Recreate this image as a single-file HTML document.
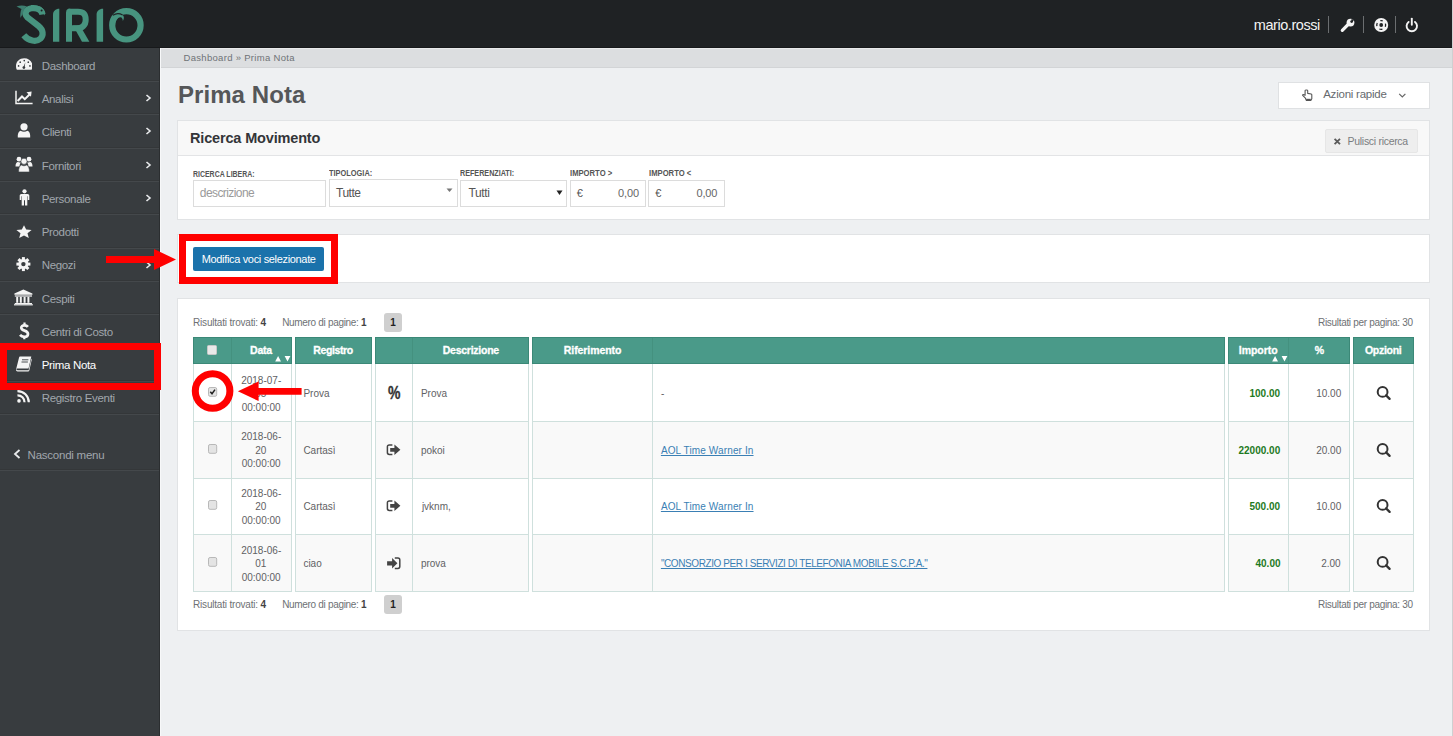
<!DOCTYPE html>
<html><head><meta charset="utf-8"><title>Prima Nota</title>
<style>
html,body{margin:0;padding:0;}
body{width:1453px;height:736px;overflow:hidden;position:relative;background:#eef0f2;font-family:"Liberation Sans",sans-serif;}
.r{position:absolute;display:block;}
.t{position:absolute;white-space:pre;line-height:1;}
</style></head><body>

<div class="r" style="left:0px;top:0px;width:1452px;height:48px;background:#1f2224;"></div>
<div class="r" style="left:0px;top:47px;width:1452px;height:1px;background:#17191b;"></div>
<div class="r" style="left:1452px;top:0px;width:1px;height:736px;background:#cfd0d1;"></div>
<svg class="r" style="left:0px;top:0px;" width="150" height="48" viewBox="0 0 150 48" preserveAspectRatio="none">
<g fill="none" stroke="#47947f">
 <path d="M42.5 14.5 C41.5 9.5 36.5 7.6 31.5 8.2 C26 9 23.5 13.5 27.5 17.5 L38.5 26 C43.5 30 43.8 35.5 40.3 38.8 C36.5 42.2 28.5 41.2 23.8 35.3" stroke-width="6.2"/>
 <path d="M69 41.7 V12.5 C69 11 70 11.8 71.5 11.8 H78 C83.5 11.8 85.7 14.5 85.7 19.7 C85.7 25 82.5 28.3 76.5 28.3 H72" stroke-width="6"/>
 <circle cx="126.4" cy="25.3" r="14.2" stroke-width="6.2"/>
</g>
<g fill="#47947f">
 <path d="M73 25.5 H80 L89.4 41.7 H82 Z"/>
 <path d="M53 41.7 V14.5 C53 11.3 55.5 8.8 59.3 8.8 V41.7 Z"/>
 <path d="M96.6 41.7 V14.5 C96.6 11.3 99 8.8 103.1 8.8 V41.7 Z"/>
 <path d="M24 9.5 C27 6.5 31.5 5.2 36 5.5 C40.5 5.9 44.3 8.5 45 12.5 L44.5 15.5 C43.5 13 41.5 11.2 39 10.8 C35 10 29 10.5 26 13.5Z"/>
 <path d="M16.5 6.5 C20 5 24 5.2 27 6.5 C24.5 8 23.5 10.5 23 13 C22 15.5 21 16.5 20.5 18 C20 15 20.5 11 21.5 9 C20 8 18 7.2 16.5 6.5Z" fill="#3d7d6f"/>
</g>
<circle cx="41.6" cy="10.4" r="1" fill="#1f2224"/>
<path d="M115.2 25.5 C115 20.5 117.5 17.2 120.5 17.3 C122 17.4 122.8 19 122.8 21 C124.6 18.5 124.2 15.3 121.5 14.6 C118 13.8 114 15.5 111.5 19.5 Z" fill="#47947f"/>
<path d="M112.8 15.3 C115.5 13.5 119.5 13.2 122.6 15" fill="none" stroke="#1f2224" stroke-width="1.3"/>
</svg>
<div class="t" style="left:1253.80px;top:17.83px;font-size:14.5px;color:#f2f2f2;letter-spacing:-0.440px;">mario.rossi</div>
<div class="r" style="left:1328px;top:16px;width:1px;height:17px;background:#6b6e70;"></div>
<div class="r" style="left:1363px;top:16px;width:1px;height:17px;background:#6b6e70;"></div>
<div class="r" style="left:1395px;top:16px;width:1px;height:17px;background:#6b6e70;"></div>
<svg class="r" style="left:1336px;top:12px;" width="24" height="24" viewBox="0 0 24 24" preserveAspectRatio="none"><path d="M6.3 18.3 L12.6 12" stroke="#f4f4f4" stroke-width="3.2" stroke-linecap="round"/><circle cx="14.5" cy="10.6" r="3.9" fill="#f4f4f4"/><path d="M15.2 7.3 L18.5 7.3 L16.2 10.6 Z" fill="#1f2224"/><circle cx="15.6" cy="9.6" r="1.3" fill="#1f2224"/></svg>
<svg class="r" style="left:1372px;top:16px;" width="18" height="18" viewBox="0 0 18 18" preserveAspectRatio="none"><circle cx="9.2" cy="9" r="7" fill="#f4f4f4"/><circle cx="9.2" cy="9" r="4.4" fill="none" stroke="#1f2224" stroke-width="1.3" stroke-dasharray="3.2 3.71" stroke-dashoffset="1.6" transform="rotate(-90 9.2 9)"/><circle cx="9.2" cy="9" r="1.9" fill="#1f2224"/></svg>
<svg class="r" style="left:1403px;top:16px;" width="18" height="18" viewBox="0 0 18 18" preserveAspectRatio="none"><path d="M5.6 5.9 A5.2 5.2 0 1 0 12 5.9" fill="none" stroke="#f4f4f4" stroke-width="1.9" stroke-linecap="round"/><path d="M8.8 2.6 V8.8" stroke="#f4f4f4" stroke-width="1.9" stroke-linecap="round"/></svg>
<div class="r" style="left:0px;top:48px;width:160px;height:688px;background:#383c3f;"></div>
<div class="r" style="left:159px;top:48px;width:1px;height:688px;background:#2b2e30;"></div>
<div class="r" style="left:0px;top:80px;width:159px;height:1px;background:#343739;"></div>
<div class="r" style="left:0px;top:81px;width:159px;height:1px;background:#44484b;"></div>
<div class="r" style="left:0px;top:113px;width:159px;height:1px;background:#343739;"></div>
<div class="r" style="left:0px;top:114px;width:159px;height:1px;background:#44484b;"></div>
<div class="r" style="left:0px;top:147px;width:159px;height:1px;background:#343739;"></div>
<div class="r" style="left:0px;top:148px;width:159px;height:1px;background:#44484b;"></div>
<div class="r" style="left:0px;top:180px;width:159px;height:1px;background:#343739;"></div>
<div class="r" style="left:0px;top:181px;width:159px;height:1px;background:#44484b;"></div>
<div class="r" style="left:0px;top:213px;width:159px;height:1px;background:#343739;"></div>
<div class="r" style="left:0px;top:214px;width:159px;height:1px;background:#44484b;"></div>
<div class="r" style="left:0px;top:247px;width:159px;height:1px;background:#343739;"></div>
<div class="r" style="left:0px;top:248px;width:159px;height:1px;background:#44484b;"></div>
<div class="r" style="left:0px;top:280px;width:159px;height:1px;background:#343739;"></div>
<div class="r" style="left:0px;top:281px;width:159px;height:1px;background:#44484b;"></div>
<div class="r" style="left:0px;top:313px;width:159px;height:1px;background:#343739;"></div>
<div class="r" style="left:0px;top:314px;width:159px;height:1px;background:#44484b;"></div>
<div class="r" style="left:0px;top:347px;width:159px;height:1px;background:#343739;"></div>
<div class="r" style="left:0px;top:348px;width:159px;height:1px;background:#44484b;"></div>
<div class="r" style="left:0px;top:380px;width:159px;height:1px;background:#343739;"></div>
<div class="r" style="left:0px;top:381px;width:159px;height:1px;background:#44484b;"></div>
<div class="r" style="left:0px;top:413px;width:159px;height:1px;background:#343739;"></div>
<div class="r" style="left:0px;top:414px;width:159px;height:1px;background:#44484b;"></div>
<div class="r" style="left:0px;top:469px;width:159px;height:1px;background:#343739;"></div>
<div class="r" style="left:0px;top:470px;width:159px;height:1px;background:#44484b;"></div>
<div class="t" style="left:41.70px;top:60.97px;font-size:11.5px;color:#a1a7ad;letter-spacing:-0.330px;">Dashboard</div>
<div class="t" style="left:41.70px;top:94.22px;font-size:11.5px;color:#a1a7ad;letter-spacing:-0.330px;">Analisi</div>
<svg class="r" style="left:145px;top:94.0px;" width="7" height="8" viewBox="0 0 7 8" preserveAspectRatio="none"><path d="M1.5 1 L5 4 L1.5 7" fill="none" stroke="#e8eaec" stroke-width="1.6"/></svg>
<div class="t" style="left:41.70px;top:127.47px;font-size:11.5px;color:#a1a7ad;letter-spacing:-0.330px;">Clienti</div>
<svg class="r" style="left:145px;top:127.333px;" width="7" height="8" viewBox="0 0 7 8" preserveAspectRatio="none"><path d="M1.5 1 L5 4 L1.5 7" fill="none" stroke="#e8eaec" stroke-width="1.6"/></svg>
<div class="t" style="left:41.70px;top:160.72px;font-size:11.5px;color:#a1a7ad;letter-spacing:-0.330px;">Fornitori</div>
<svg class="r" style="left:145px;top:160.666px;" width="7" height="8" viewBox="0 0 7 8" preserveAspectRatio="none"><path d="M1.5 1 L5 4 L1.5 7" fill="none" stroke="#e8eaec" stroke-width="1.6"/></svg>
<div class="t" style="left:41.70px;top:193.97px;font-size:11.5px;color:#a1a7ad;letter-spacing:-0.330px;">Personale</div>
<svg class="r" style="left:145px;top:193.999px;" width="7" height="8" viewBox="0 0 7 8" preserveAspectRatio="none"><path d="M1.5 1 L5 4 L1.5 7" fill="none" stroke="#e8eaec" stroke-width="1.6"/></svg>
<div class="t" style="left:41.70px;top:227.22px;font-size:11.5px;color:#a1a7ad;letter-spacing:-0.330px;">Prodotti</div>
<div class="t" style="left:41.70px;top:260.47px;font-size:11.5px;color:#a1a7ad;letter-spacing:-0.330px;">Negozi</div>
<svg class="r" style="left:145px;top:260.66499999999996px;" width="7" height="8" viewBox="0 0 7 8" preserveAspectRatio="none"><path d="M1.5 1 L5 4 L1.5 7" fill="none" stroke="#e8eaec" stroke-width="1.6"/></svg>
<div class="t" style="left:41.70px;top:293.72px;font-size:11.5px;color:#a1a7ad;letter-spacing:-0.330px;">Cespiti</div>
<div class="t" style="left:41.70px;top:326.97px;font-size:11.5px;color:#a1a7ad;letter-spacing:-0.330px;">Centri di Costo</div>
<div class="t" style="left:41.70px;top:360.22px;font-size:11.5px;color:#ffffff;letter-spacing:-0.330px;">Prima Nota</div>
<div class="t" style="left:41.70px;top:393.47px;font-size:11.5px;color:#a1a7ad;letter-spacing:-0.330px;">Registro Eventi</div>
<div class="t" style="left:27.60px;top:449.67px;font-size:11.5px;color:#a1a7ad;letter-spacing:-0.240px;">Nascondi menu</div>
<svg class="r" style="left:13px;top:449px;" width="9" height="10" viewBox="0 0 9 10" preserveAspectRatio="none"><path d="M6.5 1 L2 5 L6.5 9" fill="none" stroke="#e8eaec" stroke-width="1.8"/></svg>
<svg class="r" style="left:15.5px;top:58px;" width="16.5" height="13" viewBox="0 0 18 14" preserveAspectRatio="none"><path d="M1 12.6 C0.2 11.5 0 10 0 8.6 C0 4 3.9 0.4 9 0.4 C14.1 0.4 18 4 18 8.6 C18 10 17.7 11.5 17 12.6 Z" fill="#f4f4f4"/>
<g fill="#383c3f"><circle cx="9" cy="2.8" r="0.9"/><circle cx="4.6" cy="4.5" r="0.9"/><circle cx="13.4" cy="4.5" r="0.9"/><circle cx="2.8" cy="8.5" r="0.9"/><circle cx="15.2" cy="8.5" r="0.9"/><circle cx="8.6" cy="10.3" r="1.5"/><path d="M8 10 L10.2 4.6 L9.3 10.4Z"/></g></svg>
<svg class="r" style="left:15px;top:90px;" width="18" height="15" viewBox="0 0 18 15" preserveAspectRatio="none"><path d="M1 0.8 V13.6 H17.6" fill="none" stroke="#f4f4f4" stroke-width="1.5"/><path d="M2.6 11 L7 6.5 L9.8 9.2 L15 4" fill="none" stroke="#f4f4f4" stroke-width="2"/><path d="M11.5 2.2 L16.6 1.6 L16 6.8Z" fill="#f4f4f4"/></svg>
<svg class="r" style="left:17px;top:123px;" width="14" height="15" viewBox="0 0 14 15" preserveAspectRatio="none"><circle cx="7" cy="3.8" r="3.6" fill="#f4f4f4"/><path d="M0.8 14.6 C0.5 11 1.5 8.4 3.6 7.8 C5.5 9 8.5 9 10.4 7.8 C12.5 8.4 13.5 11 13.2 14.6 Z" fill="#f4f4f4"/></svg>
<svg class="r" style="left:15px;top:155px;" width="18" height="18" viewBox="0 0 18 18" preserveAspectRatio="none"><circle cx="4" cy="4.2" r="2.4" fill="#f4f4f4"/><circle cx="14" cy="4.2" r="2.4" fill="#f4f4f4"/><path d="M0.5 11.5 C0.5 8.5 1.5 7 3 7 C4 7.6 5 7.6 6 7.2 C5 8.5 4.5 10 4.6 11.5Z M17.5 11.5 C17.5 8.5 16.5 7 15 7 C14 7.6 13 7.6 12 7.2 C13 8.5 13.5 10 13.4 11.5Z" fill="#f4f4f4"/><circle cx="9" cy="6.3" r="3.1" fill="#f4f4f4" stroke="#383c3f" stroke-width="0.6"/><path d="M3.6 17 C3.4 13.5 4.4 10.6 6.4 10 C8 11 10 11 11.6 10 C13.6 10.6 14.6 13.5 14.4 17 Z" fill="#f4f4f4" stroke="#383c3f" stroke-width="0.6"/></svg>
<svg class="r" style="left:19px;top:189px;" width="11" height="17" viewBox="0 0 11 17" preserveAspectRatio="none"><circle cx="5.5" cy="2.3" r="2.1" fill="#f4f4f4"/><path d="M2.5 5 H8.5 C9.6 5 10.3 5.7 10.3 6.8 V11 H8.8 V7.2 H8.3 V16.5 H6 V11.2 H5 V16.5 H2.7 V7.2 H2.2 V11 H0.7 V6.8 C0.7 5.7 1.4 5 2.5 5Z" fill="#f4f4f4"/></svg>
<svg class="r" style="left:16px;top:225px;" width="16" height="13" viewBox="0 0 16 13" preserveAspectRatio="none"><path d="M8 0.3 L10.2 4.6 L15.6 5 L11.5 8.3 L12.8 12.9 L8 10.4 L3.2 12.9 L4.5 8.3 L0.4 5 L5.8 4.6 Z" fill="#f4f4f4"/></svg>
<svg class="r" style="left:16px;top:257px;" width="15" height="15" viewBox="0 0 15 15" preserveAspectRatio="none"><g transform="translate(7.4,7.1)"><circle r="5" fill="#f4f4f4"/><rect x="-1.5" y="-7" width="3" height="3.5" fill="#f4f4f4" transform="rotate(0)"/><rect x="-1.5" y="-7" width="3" height="3.5" fill="#f4f4f4" transform="rotate(45)"/><rect x="-1.5" y="-7" width="3" height="3.5" fill="#f4f4f4" transform="rotate(90)"/><rect x="-1.5" y="-7" width="3" height="3.5" fill="#f4f4f4" transform="rotate(135)"/><rect x="-1.5" y="-7" width="3" height="3.5" fill="#f4f4f4" transform="rotate(180)"/><rect x="-1.5" y="-7" width="3" height="3.5" fill="#f4f4f4" transform="rotate(225)"/><rect x="-1.5" y="-7" width="3" height="3.5" fill="#f4f4f4" transform="rotate(270)"/><rect x="-1.5" y="-7" width="3" height="3.5" fill="#f4f4f4" transform="rotate(315)"/><circle r="2.2" fill="#383c3f"/></g></svg>
<svg class="r" style="left:14px;top:289px;" width="19" height="17" viewBox="0 0 19 17" preserveAspectRatio="none"><path d="M9.4 0.5 L18.4 4.5 V5.8 H0.4 V4.5 Z" fill="#f4f4f4"/><rect x="0.8" y="6.4" width="17.2" height="1.2" fill="#f4f4f4"/><g fill="#f4f4f4"><rect x="2.2" y="7.8" width="2" height="6"/><rect x="5.8" y="7.8" width="2" height="6"/><rect x="9.6" y="7.8" width="2" height="6"/><rect x="13.4" y="7.8" width="2" height="6"/></g><rect x="0.8" y="14" width="17.2" height="1.1" fill="#f4f4f4"/><rect x="0" y="15.2" width="18.8" height="1.2" fill="#f4f4f4"/></svg>
<svg class="r" style="left:19px;top:322px;" width="11" height="18" viewBox="0 0 11 18" preserveAspectRatio="none"><path d="M8.9 4.9 C8 3.7 6.9 3.3 5.4 3.3 C3.5 3.3 2.3 4.3 2.3 5.7 C2.3 9.4 9 7.8 9 11.9 C9 13.7 7.5 14.8 5.2 14.8 C3.5 14.8 2 14.1 1 12.9" fill="none" stroke="#f4f4f4" stroke-width="2.7"/><path d="M5.5 0.6 V3.5 M5.3 14.6 V17.3" stroke="#f4f4f4" stroke-width="2.2"/></svg>
<svg class="r" style="left:16px;top:356px;" width="16" height="16" viewBox="0 0 16 16" preserveAspectRatio="none"><path d="M4.3 0.6 H15.3 L12.5 12.4 H1.2 C0.6 12.4 0.3 12.9 0.5 13.5 C0.7 14 1.1 14.3 1.7 14.3 H12.6 L15.4 2.5 L15.8 3.5 L13.3 14.5 C13.1 15.2 12.5 15.5 11.8 15.5 H1.6 C0.6 15.5 -0.2 14.6 0.1 13.3 L3 1.8 C3.2 1.1 3.6 0.6 4.3 0.6Z" fill="#f4f4f4"/><path d="M6 3.8 H12.4 M5.5 6 H11.9" stroke="#383c3f" stroke-width="0.9"/></svg>
<svg class="r" style="left:17.3px;top:390.2px;" width="13.6" height="13.6" viewBox="0 0 15 15" preserveAspectRatio="none"><circle cx="2.2" cy="12" r="2" fill="#f4f4f4"/><path d="M0.5 5.9 A7.6 7.6 0 0 1 8.3 13.6" fill="none" stroke="#f4f4f4" stroke-width="2.4"/><path d="M0.5 1.2 A12.4 12.4 0 0 1 13 13.6" fill="none" stroke="#f4f4f4" stroke-width="2.4"/></svg>
<div class="r" style="left:160px;top:48px;width:1292px;height:20px;background:#dcdee0;"></div>
<div class="r" style="left:160px;top:48px;width:1292px;height:1px;background:#e9eaeb;"></div>
<div class="r" style="left:160px;top:67px;width:1292px;height:1px;background:#d2d4d6;"></div>
<div class="r" style="left:160px;top:48px;width:1px;height:688px;background:#f7f8f9;"></div>
<div class="t" style="left:183.50px;top:52.96px;font-size:9.5px;color:#6f7377;letter-spacing:0.305px;">Dashboard » Prima Nota</div>
<div class="t" style="left:177.90px;top:82.68px;font-size:24px;color:#555759;font-weight:bold;letter-spacing:0.078px;">Prima Nota</div>
<div class="r" style="left:1278px;top:82px;width:152px;height:27px;box-sizing:border-box;background:#fff;border:1px solid #dfe1e3;"></div>
<svg class="r" style="left:1300px;top:88px;" width="14" height="14" viewBox="0 0 14 14" preserveAspectRatio="none"><path d="M5.1 2.4 C5.1 1.9 7.7 1.9 7.7 2.4 V5.4 L11.2 6 C11.6 6.1 11.8 6.4 11.8 6.8 V10.8 L10.8 12.5 H6.4 L5.4 10.2 L2.9 7.7 C2.5 7.3 2.6 6.6 3.1 6.5 C3.6 6.4 4.4 6.8 5.1 7.3 Z" fill="#fff" stroke="#555" stroke-width="1.1" stroke-linejoin="round"/><rect x="6.2" y="10.8" width="4.6" height="1.8" fill="#555"/></svg>
<div class="t" style="left:1323.20px;top:88.77px;font-size:11.5px;color:#666a6e;letter-spacing:-0.233px;">Azioni rapide</div>
<svg class="r" style="left:1398px;top:92px;" width="9" height="7" viewBox="0 0 9 7" preserveAspectRatio="none"><path d="M1.2 1.8 L4.3 5 L7.4 1.8" fill="none" stroke="#666" stroke-width="1.2"/></svg>
<div class="r" style="left:177px;top:120px;width:1253px;height:100px;box-sizing:border-box;background:#fff;border:1px solid #e1e3e5;"></div>
<div class="r" style="left:178px;top:121px;width:1251px;height:34px;background:#f8f8f8;"></div>
<div class="r" style="left:178px;top:155px;width:1251px;height:1px;background:#e3e4e6;"></div>
<div class="t" style="left:190.00px;top:130.73px;font-size:14.5px;color:#333538;font-weight:bold;letter-spacing:-0.162px;">Ricerca Movimento</div>
<div class="r" style="left:1325px;top:129px;width:93px;height:24px;box-sizing:border-box;background:#eeeeee;border:1px solid #e6e6e6;border-radius:2px;"></div>
<svg class="r" style="left:1333px;top:137px;" width="9" height="9" viewBox="0 0 9 9" preserveAspectRatio="none"><path d="M1.6 1.8 L7 7.2 M7 1.8 L1.6 7.2" stroke="#5a5a5a" stroke-width="1.8"/></svg>
<div class="t" style="left:1347.60px;top:136.01px;font-size:10.5px;color:#7a7d80;letter-spacing:-0.300px;">Pulisci ricerca</div>
<div class="t" style="left:193.10px;top:169.55px;font-size:8.8px;color:#555;font-weight:bold;transform:scaleX(0.7910);transform-origin:0 0;">RICERCA LIBERA:</div>
<div class="t" style="left:329.30px;top:168.55px;font-size:8.8px;color:#555;font-weight:bold;transform:scaleX(0.8431);transform-origin:0 0;">TIPOLOGIA:</div>
<div class="t" style="left:460.40px;top:169.05px;font-size:8.8px;color:#555;font-weight:bold;transform:scaleX(0.8167);transform-origin:0 0;">REFERENZIATI:</div>
<div class="t" style="left:570.20px;top:169.05px;font-size:8.8px;color:#555;font-weight:bold;transform:scaleX(0.8708);transform-origin:0 0;">IMPORTO &gt;</div>
<div class="t" style="left:648.60px;top:169.05px;font-size:8.8px;color:#555;font-weight:bold;transform:scaleX(0.8729);transform-origin:0 0;">IMPORTO &lt;</div>
<div class="r" style="left:193px;top:180px;width:133px;height:27px;box-sizing:border-box;background:#fff;border:1px solid #dcdcdc;"></div>
<div class="t" style="left:199.80px;top:187.44px;font-size:12px;color:#9a9a9a;letter-spacing:-0.580px;">descrizione</div>
<div class="r" style="left:329px;top:179px;width:129px;height:28px;box-sizing:border-box;background:#fff;border:1px solid #dcdcdc;"></div>
<div class="t" style="left:336.00px;top:187.44px;font-size:12px;color:#555;letter-spacing:-0.500px;">Tutte</div>
<svg class="r" style="left:446px;top:188px;" width="7" height="5" viewBox="0 0 7 5" preserveAspectRatio="none"><path d="M0.5 0.5 H6.5 L3.5 4Z" fill="#777"/></svg>
<div class="r" style="left:460px;top:180px;width:107px;height:27px;box-sizing:border-box;background:#fff;border:1px solid #dcdcdc;"></div>
<div class="t" style="left:468.40px;top:187.44px;font-size:12px;color:#555;letter-spacing:-0.350px;">Tutti</div>
<svg class="r" style="left:556px;top:190px;" width="7" height="6" viewBox="0 0 7 6" preserveAspectRatio="none"><path d="M0.5 0.5 H6.5 L3.5 5Z" fill="#222"/></svg>
<div class="r" style="left:570px;top:180px;width:76px;height:27px;box-sizing:border-box;background:#fff;border:1px solid #dcdcdc;"></div>
<div class="t" style="left:576.70px;top:188.29px;font-size:11px;color:#555;">€</div>
<div class="t" style="left:618.00px;top:188.29px;font-size:11px;color:#666;letter-spacing:-0.133px;">0,00</div>
<div class="r" style="left:648px;top:180px;width:77px;height:27px;box-sizing:border-box;background:#fff;border:1px solid #dcdcdc;"></div>
<div class="t" style="left:655.20px;top:188.29px;font-size:11px;color:#555;">€</div>
<div class="t" style="left:696.50px;top:188.29px;font-size:11px;color:#666;letter-spacing:-0.167px;">0,00</div>
<div class="r" style="left:177px;top:234px;width:1253px;height:49px;box-sizing:border-box;background:#fff;border:1px solid #e1e3e5;"></div>
<div class="r" style="left:193px;top:247px;width:131px;height:24px;box-sizing:border-box;background:#1a72ab;border-radius:2px;"></div>
<div class="t" style="left:201.70px;top:253.59px;font-size:11px;color:#ffffff;letter-spacing:-0.333px;">Modifica voci selezionate</div>
<div class="r" style="left:177px;top:298px;width:1253px;height:333px;box-sizing:border-box;background:#fff;border:1px solid #e1e3e5;"></div>
<div class="t" style="left:193.00px;top:317.94px;font-size:10px;color:#6e7174;letter-spacing:-0.189px;">Risultati trovati: <b style="color:#444">4</b></div>
<div class="t" style="left:282.20px;top:317.94px;font-size:10px;color:#6e7174;letter-spacing:-0.317px;">Numero di pagine: <b style="color:#444">1</b></div>
<div class="r" style="left:384px;top:313px;width:18px;height:19px;box-sizing:border-box;background:#cfcfcf;border-radius:3px;"></div>
<div class="t" style="left:390.20px;top:317.94px;font-size:10px;color:#222;font-weight:bold;">1</div>
<div class="t" style="left:1318.00px;top:317.74px;font-size:10px;color:#6e7174;letter-spacing:-0.313px;">Risultati per pagina: 30</div>
<div class="r" style="left:193px;top:337px;width:99px;height:27px;background:#4a9a89;"></div>
<div class="r" style="left:193px;top:337px;width:99px;height:1px;background:#3b8877;"></div>
<div class="r" style="left:193px;top:363px;width:99px;height:1px;background:#3b8877;"></div>
<div class="r" style="left:193px;top:337px;width:1px;height:27px;background:#3b8877;"></div>
<div class="r" style="left:291px;top:337px;width:1px;height:27px;background:#3b8877;"></div>
<div class="r" style="left:231px;top:338px;width:1px;height:25px;background:#44917f;"></div>
<div class="r" style="left:193px;top:364px;width:99px;height:57px;background:#ffffff;"></div>
<div class="r" style="left:193px;top:422px;width:99px;height:56px;background:#f9f9f9;"></div>
<div class="r" style="left:193px;top:479px;width:99px;height:55px;background:#ffffff;"></div>
<div class="r" style="left:193px;top:535px;width:99px;height:56px;background:#f9f9f9;"></div>
<div class="r" style="left:193px;top:421px;width:99px;height:1px;background:#cfe0dd;"></div>
<div class="r" style="left:193px;top:478px;width:99px;height:1px;background:#cfe0dd;"></div>
<div class="r" style="left:193px;top:534px;width:99px;height:1px;background:#cfe0dd;"></div>
<div class="r" style="left:193px;top:591px;width:99px;height:1px;background:#cfe0dd;"></div>
<div class="r" style="left:193px;top:364px;width:1px;height:228px;background:#cfe0dd;"></div>
<div class="r" style="left:291px;top:364px;width:1px;height:228px;background:#cfe0dd;"></div>
<div class="r" style="left:231px;top:364px;width:1px;height:228px;background:#cfe0dd;"></div>
<div class="r" style="left:295px;top:337px;width:77px;height:27px;background:#4a9a89;"></div>
<div class="r" style="left:295px;top:337px;width:77px;height:1px;background:#3b8877;"></div>
<div class="r" style="left:295px;top:363px;width:77px;height:1px;background:#3b8877;"></div>
<div class="r" style="left:295px;top:337px;width:1px;height:27px;background:#3b8877;"></div>
<div class="r" style="left:371px;top:337px;width:1px;height:27px;background:#3b8877;"></div>
<div class="r" style="left:295px;top:364px;width:77px;height:57px;background:#ffffff;"></div>
<div class="r" style="left:295px;top:422px;width:77px;height:56px;background:#f9f9f9;"></div>
<div class="r" style="left:295px;top:479px;width:77px;height:55px;background:#ffffff;"></div>
<div class="r" style="left:295px;top:535px;width:77px;height:56px;background:#f9f9f9;"></div>
<div class="r" style="left:295px;top:421px;width:77px;height:1px;background:#cfe0dd;"></div>
<div class="r" style="left:295px;top:478px;width:77px;height:1px;background:#cfe0dd;"></div>
<div class="r" style="left:295px;top:534px;width:77px;height:1px;background:#cfe0dd;"></div>
<div class="r" style="left:295px;top:591px;width:77px;height:1px;background:#cfe0dd;"></div>
<div class="r" style="left:295px;top:364px;width:1px;height:228px;background:#cfe0dd;"></div>
<div class="r" style="left:371px;top:364px;width:1px;height:228px;background:#cfe0dd;"></div>
<div class="r" style="left:375px;top:337px;width:154px;height:27px;background:#4a9a89;"></div>
<div class="r" style="left:375px;top:337px;width:154px;height:1px;background:#3b8877;"></div>
<div class="r" style="left:375px;top:363px;width:154px;height:1px;background:#3b8877;"></div>
<div class="r" style="left:375px;top:337px;width:1px;height:27px;background:#3b8877;"></div>
<div class="r" style="left:528px;top:337px;width:1px;height:27px;background:#3b8877;"></div>
<div class="r" style="left:412px;top:338px;width:1px;height:25px;background:#44917f;"></div>
<div class="r" style="left:375px;top:364px;width:154px;height:57px;background:#ffffff;"></div>
<div class="r" style="left:375px;top:422px;width:154px;height:56px;background:#f9f9f9;"></div>
<div class="r" style="left:375px;top:479px;width:154px;height:55px;background:#ffffff;"></div>
<div class="r" style="left:375px;top:535px;width:154px;height:56px;background:#f9f9f9;"></div>
<div class="r" style="left:375px;top:421px;width:154px;height:1px;background:#cfe0dd;"></div>
<div class="r" style="left:375px;top:478px;width:154px;height:1px;background:#cfe0dd;"></div>
<div class="r" style="left:375px;top:534px;width:154px;height:1px;background:#cfe0dd;"></div>
<div class="r" style="left:375px;top:591px;width:154px;height:1px;background:#cfe0dd;"></div>
<div class="r" style="left:375px;top:364px;width:1px;height:228px;background:#cfe0dd;"></div>
<div class="r" style="left:528px;top:364px;width:1px;height:228px;background:#cfe0dd;"></div>
<div class="r" style="left:412px;top:364px;width:1px;height:228px;background:#cfe0dd;"></div>
<div class="r" style="left:532px;top:337px;width:693px;height:27px;background:#4a9a89;"></div>
<div class="r" style="left:532px;top:337px;width:693px;height:1px;background:#3b8877;"></div>
<div class="r" style="left:532px;top:363px;width:693px;height:1px;background:#3b8877;"></div>
<div class="r" style="left:532px;top:337px;width:1px;height:27px;background:#3b8877;"></div>
<div class="r" style="left:1224px;top:337px;width:1px;height:27px;background:#3b8877;"></div>
<div class="r" style="left:652px;top:338px;width:1px;height:25px;background:#44917f;"></div>
<div class="r" style="left:532px;top:364px;width:693px;height:57px;background:#ffffff;"></div>
<div class="r" style="left:532px;top:422px;width:693px;height:56px;background:#f9f9f9;"></div>
<div class="r" style="left:532px;top:479px;width:693px;height:55px;background:#ffffff;"></div>
<div class="r" style="left:532px;top:535px;width:693px;height:56px;background:#f9f9f9;"></div>
<div class="r" style="left:532px;top:421px;width:693px;height:1px;background:#cfe0dd;"></div>
<div class="r" style="left:532px;top:478px;width:693px;height:1px;background:#cfe0dd;"></div>
<div class="r" style="left:532px;top:534px;width:693px;height:1px;background:#cfe0dd;"></div>
<div class="r" style="left:532px;top:591px;width:693px;height:1px;background:#cfe0dd;"></div>
<div class="r" style="left:532px;top:364px;width:1px;height:228px;background:#cfe0dd;"></div>
<div class="r" style="left:1224px;top:364px;width:1px;height:228px;background:#cfe0dd;"></div>
<div class="r" style="left:652px;top:364px;width:1px;height:228px;background:#cfe0dd;"></div>
<div class="r" style="left:1228px;top:337px;width:122px;height:27px;background:#4a9a89;"></div>
<div class="r" style="left:1228px;top:337px;width:122px;height:1px;background:#3b8877;"></div>
<div class="r" style="left:1228px;top:363px;width:122px;height:1px;background:#3b8877;"></div>
<div class="r" style="left:1228px;top:337px;width:1px;height:27px;background:#3b8877;"></div>
<div class="r" style="left:1349px;top:337px;width:1px;height:27px;background:#3b8877;"></div>
<div class="r" style="left:1288px;top:338px;width:1px;height:25px;background:#44917f;"></div>
<div class="r" style="left:1228px;top:364px;width:122px;height:57px;background:#ffffff;"></div>
<div class="r" style="left:1228px;top:422px;width:122px;height:56px;background:#f9f9f9;"></div>
<div class="r" style="left:1228px;top:479px;width:122px;height:55px;background:#ffffff;"></div>
<div class="r" style="left:1228px;top:535px;width:122px;height:56px;background:#f9f9f9;"></div>
<div class="r" style="left:1228px;top:421px;width:122px;height:1px;background:#cfe0dd;"></div>
<div class="r" style="left:1228px;top:478px;width:122px;height:1px;background:#cfe0dd;"></div>
<div class="r" style="left:1228px;top:534px;width:122px;height:1px;background:#cfe0dd;"></div>
<div class="r" style="left:1228px;top:591px;width:122px;height:1px;background:#cfe0dd;"></div>
<div class="r" style="left:1228px;top:364px;width:1px;height:228px;background:#cfe0dd;"></div>
<div class="r" style="left:1349px;top:364px;width:1px;height:228px;background:#cfe0dd;"></div>
<div class="r" style="left:1288px;top:364px;width:1px;height:228px;background:#cfe0dd;"></div>
<div class="r" style="left:1353px;top:337px;width:61px;height:27px;background:#4a9a89;"></div>
<div class="r" style="left:1353px;top:337px;width:61px;height:1px;background:#3b8877;"></div>
<div class="r" style="left:1353px;top:363px;width:61px;height:1px;background:#3b8877;"></div>
<div class="r" style="left:1353px;top:337px;width:1px;height:27px;background:#3b8877;"></div>
<div class="r" style="left:1413px;top:337px;width:1px;height:27px;background:#3b8877;"></div>
<div class="r" style="left:1353px;top:364px;width:61px;height:57px;background:#ffffff;"></div>
<div class="r" style="left:1353px;top:422px;width:61px;height:56px;background:#f9f9f9;"></div>
<div class="r" style="left:1353px;top:479px;width:61px;height:55px;background:#ffffff;"></div>
<div class="r" style="left:1353px;top:535px;width:61px;height:56px;background:#f9f9f9;"></div>
<div class="r" style="left:1353px;top:421px;width:61px;height:1px;background:#cfe0dd;"></div>
<div class="r" style="left:1353px;top:478px;width:61px;height:1px;background:#cfe0dd;"></div>
<div class="r" style="left:1353px;top:534px;width:61px;height:1px;background:#cfe0dd;"></div>
<div class="r" style="left:1353px;top:591px;width:61px;height:1px;background:#cfe0dd;"></div>
<div class="r" style="left:1353px;top:364px;width:1px;height:228px;background:#cfe0dd;"></div>
<div class="r" style="left:1413px;top:364px;width:1px;height:228px;background:#cfe0dd;"></div>
<svg class="r" style="left:207px;top:345px;" width="11" height="10" viewBox="0 0 11 10" preserveAspectRatio="none"><rect x="0.5" y="0.5" width="9" height="9" rx="1" fill="#e9e9e9" stroke="#c8c8c8" stroke-width="1"/></svg>
<div class="t" style="left:250.10px;top:345.21px;font-size:10.5px;color:#ffffff;font-weight:bold;letter-spacing:-0.267px;-webkit-text-stroke:0.3px #fff;">Data</div>
<div class="t" style="left:313.30px;top:345.21px;font-size:10.5px;color:#ffffff;font-weight:bold;letter-spacing:-0.386px;-webkit-text-stroke:0.3px #fff;">Registro</div>
<div class="t" style="left:442.80px;top:345.21px;font-size:10.5px;color:#ffffff;font-weight:bold;letter-spacing:-0.260px;-webkit-text-stroke:0.3px #fff;">Descrizione</div>
<div class="t" style="left:563.80px;top:345.21px;font-size:10.5px;color:#ffffff;font-weight:bold;letter-spacing:-0.070px;-webkit-text-stroke:0.3px #fff;">Riferimento</div>
<div class="t" style="left:1238.80px;top:345.21px;font-size:10.5px;color:#ffffff;font-weight:bold;letter-spacing:-0.033px;-webkit-text-stroke:0.3px #fff;">Importo</div>
<div class="t" style="left:1314.70px;top:345.21px;font-size:10.5px;color:#ffffff;font-weight:bold;-webkit-text-stroke:0.3px #fff;">%</div>
<div class="t" style="left:1365.00px;top:345.21px;font-size:10.5px;color:#ffffff;font-weight:bold;letter-spacing:-0.300px;-webkit-text-stroke:0.3px #fff;">Opzioni</div>
<svg class="r" style="left:274.5px;top:355.5px;" width="16" height="6" viewBox="0 0 16 6" preserveAspectRatio="none"><path d="M0.2 5.4 L3.1 0 L6 5.4Z M9.6 0 H15.4 L12.5 5.4Z" fill="#fff"/></svg>
<svg class="r" style="left:1271.5px;top:355.5px;" width="16" height="6" viewBox="0 0 16 6" preserveAspectRatio="none"><path d="M0.2 5.4 L3.1 0 L6 5.4Z M9.6 0 H15.4 L12.5 5.4Z" fill="#fff"/></svg>
<svg class="r" style="left:208px;top:387px;" width="11" height="11" viewBox="0 0 11 11" preserveAspectRatio="none"><rect x="0.5" y="0.5" width="8.2" height="8.8" rx="1.6" fill="#e4e4e4" stroke="#b8b8b8" stroke-width="1"/><path d="M2.3 4.8 L4 6.8 L7 2.6" fill="none" stroke="#222" stroke-width="1.5"/></svg>
<div class="t" style="left:241.20px;top:375.54px;font-size:10px;color:#5f6164;">2018-07-</div>
<div class="t" style="left:255.20px;top:389.04px;font-size:10px;color:#5f6164;">05</div>
<div class="t" style="left:241.70px;top:402.54px;font-size:10px;color:#5f6164;">00:00:00</div>
<div class="t" style="left:303.40px;top:389.04px;font-size:10px;color:#5f6164;">Prova</div>
<div class="t" style="left:387.50px;top:384.79px;font-size:17.5px;color:#333;font-weight:bold;transform:scaleX(0.8);transform-origin:0 0;-webkit-text-stroke:0.35px #333;">%</div>
<div class="t" style="left:420.90px;top:389.04px;font-size:10px;color:#5f6164;">Prova</div>
<div class="t" style="left:660.90px;top:388.54px;font-size:10px;color:#5f6164;">-</div>
<div class="t" style="left:1249.50px;top:389.04px;font-size:10px;color:#1e7a1e;font-weight:bold;">100.00</div>
<div class="t" style="left:1316.20px;top:389.04px;font-size:10px;color:#5f6164;">10.00</div>
<svg class="r" style="left:1375px;top:385px;" width="17" height="17" viewBox="0 0 17 17" preserveAspectRatio="none"><circle cx="7.6" cy="6.9" r="4.9" fill="none" stroke="#333" stroke-width="2"/><path d="M11.1 10.4 L14.6 13.9" stroke="#333" stroke-width="2.3" stroke-linecap="round"/></svg>
<svg class="r" style="left:208px;top:444px;" width="11" height="11" viewBox="0 0 11 11" preserveAspectRatio="none"><rect x="0.5" y="0.5" width="8.2" height="8.8" rx="1.6" fill="#e4e4e4" stroke="#b8b8b8" stroke-width="1"/></svg>
<div class="t" style="left:241.20px;top:432.21px;font-size:10px;color:#5f6164;">2018-06-</div>
<div class="t" style="left:255.20px;top:445.71px;font-size:10px;color:#5f6164;">20</div>
<div class="t" style="left:241.70px;top:459.21px;font-size:10px;color:#5f6164;">00:00:00</div>
<div class="t" style="left:303.40px;top:445.71px;font-size:10px;color:#5f6164;">Cartasì</div>
<svg class="r" style="left:386px;top:443px;" width="16" height="14" viewBox="0 0 16 14" preserveAspectRatio="none"><path d="M6.4 1.9 H3.3 C2 1.9 1.4 2.6 1.4 3.8 V9.6 C1.4 10.8 2 11.5 3.3 11.5 H6.4" fill="none" stroke="#444" stroke-width="1.5"/><path d="M4.2 5 H8.4 V1.4 L14.4 6.7 L8.4 12 V8.7 H4.2Z" fill="#444"/></svg>
<div class="t" style="left:420.90px;top:445.71px;font-size:10px;color:#5f6164;">pokoi</div>
<div class="t" style="left:660.90px;top:445.71px;font-size:10px;color:#3a7fb4;letter-spacing:0.124px;text-decoration:underline;">AOL Time Warner In</div>
<div class="t" style="left:1238.50px;top:445.71px;font-size:10px;color:#1e7a1e;font-weight:bold;">22000.00</div>
<div class="t" style="left:1316.20px;top:445.71px;font-size:10px;color:#5f6164;">20.00</div>
<svg class="r" style="left:1375px;top:442px;" width="17" height="17" viewBox="0 0 17 17" preserveAspectRatio="none"><circle cx="7.6" cy="6.9" r="4.9" fill="none" stroke="#333" stroke-width="2"/><path d="M11.1 10.4 L14.6 13.9" stroke="#333" stroke-width="2.3" stroke-linecap="round"/></svg>
<svg class="r" style="left:208px;top:500px;" width="11" height="11" viewBox="0 0 11 11" preserveAspectRatio="none"><rect x="0.5" y="0.5" width="8.2" height="8.8" rx="1.6" fill="#e4e4e4" stroke="#b8b8b8" stroke-width="1"/></svg>
<div class="t" style="left:241.20px;top:488.88px;font-size:10px;color:#5f6164;">2018-06-</div>
<div class="t" style="left:255.20px;top:502.38px;font-size:10px;color:#5f6164;">20</div>
<div class="t" style="left:241.70px;top:515.88px;font-size:10px;color:#5f6164;">00:00:00</div>
<div class="t" style="left:303.40px;top:502.38px;font-size:10px;color:#5f6164;">Cartasì</div>
<svg class="r" style="left:386px;top:499px;" width="16" height="14" viewBox="0 0 16 14" preserveAspectRatio="none"><path d="M6.4 1.9 H3.3 C2 1.9 1.4 2.6 1.4 3.8 V9.6 C1.4 10.8 2 11.5 3.3 11.5 H6.4" fill="none" stroke="#444" stroke-width="1.5"/><path d="M4.2 5 H8.4 V1.4 L14.4 6.7 L8.4 12 V8.7 H4.2Z" fill="#444"/></svg>
<div class="t" style="left:421.90px;top:502.38px;font-size:10px;color:#5f6164;">jvknm,</div>
<div class="t" style="left:660.90px;top:502.38px;font-size:10px;color:#3a7fb4;letter-spacing:0.124px;text-decoration:underline;">AOL Time Warner In</div>
<div class="t" style="left:1249.50px;top:502.38px;font-size:10px;color:#1e7a1e;font-weight:bold;">500.00</div>
<div class="t" style="left:1316.20px;top:502.38px;font-size:10px;color:#5f6164;">10.00</div>
<svg class="r" style="left:1375px;top:498px;" width="17" height="17" viewBox="0 0 17 17" preserveAspectRatio="none"><circle cx="7.6" cy="6.9" r="4.9" fill="none" stroke="#333" stroke-width="2"/><path d="M11.1 10.4 L14.6 13.9" stroke="#333" stroke-width="2.3" stroke-linecap="round"/></svg>
<svg class="r" style="left:208px;top:557px;" width="11" height="11" viewBox="0 0 11 11" preserveAspectRatio="none"><rect x="0.5" y="0.5" width="8.2" height="8.8" rx="1.6" fill="#e4e4e4" stroke="#b8b8b8" stroke-width="1"/></svg>
<div class="t" style="left:241.20px;top:545.54px;font-size:10px;color:#5f6164;">2018-06-</div>
<div class="t" style="left:255.20px;top:559.04px;font-size:10px;color:#5f6164;">01</div>
<div class="t" style="left:241.70px;top:572.54px;font-size:10px;color:#5f6164;">00:00:00</div>
<div class="t" style="left:303.40px;top:559.04px;font-size:10px;color:#5f6164;">ciao</div>
<svg class="r" style="left:386px;top:556px;" width="16" height="14" viewBox="0 0 16 14" preserveAspectRatio="none"><path d="M8.8 2.1 H11.9 C13.2 2.1 13.8 2.8 13.8 4 V10.6 C13.8 11.8 13.2 12.4 11.9 12.4 H8.8" fill="none" stroke="#444" stroke-width="1.5"/><path d="M1.1 5.2 H6.1 V1.9 L11.4 7.2 L6.1 12.4 V9.4 H1.1Z" fill="#444"/></svg>
<div class="t" style="left:420.90px;top:559.04px;font-size:10px;color:#5f6164;">prova</div>
<div class="t" style="left:660.90px;top:559.04px;font-size:10px;color:#3a7fb4;letter-spacing:-0.413px;text-decoration:underline;">&quot;CONSORZIO PER I SERVIZI DI TELEFONIA MOBILE S.C.P.A.&quot;</div>
<div class="t" style="left:1255.50px;top:559.04px;font-size:10px;color:#1e7a1e;font-weight:bold;">40.00</div>
<div class="t" style="left:1321.20px;top:559.04px;font-size:10px;color:#5f6164;">2.00</div>
<svg class="r" style="left:1375px;top:555px;" width="17" height="17" viewBox="0 0 17 17" preserveAspectRatio="none"><circle cx="7.6" cy="6.9" r="4.9" fill="none" stroke="#333" stroke-width="2"/><path d="M11.1 10.4 L14.6 13.9" stroke="#333" stroke-width="2.3" stroke-linecap="round"/></svg>
<div class="t" style="left:193.00px;top:599.74px;font-size:10px;color:#6e7174;letter-spacing:-0.189px;">Risultati trovati: <b style="color:#444">4</b></div>
<div class="t" style="left:282.20px;top:599.74px;font-size:10px;color:#6e7174;letter-spacing:-0.317px;">Numero di pagine: <b style="color:#444">1</b></div>
<div class="r" style="left:384px;top:595px;width:18px;height:19px;box-sizing:border-box;background:#cfcfcf;border-radius:3px;"></div>
<div class="t" style="left:390.20px;top:599.74px;font-size:10px;color:#222;font-weight:bold;">1</div>
<div class="t" style="left:1318.00px;top:599.74px;font-size:10px;color:#6e7174;letter-spacing:-0.313px;">Risultati per pagina: 30</div>
<div class="r" style="left:0px;top:343px;width:161px;height:47px;box-sizing:border-box;border:7px solid #ff0000;"></div>
<div class="r" style="left:179px;top:234px;width:159px;height:50px;box-sizing:border-box;border:7px solid #ff0000;"></div>
<svg class="r" style="left:105px;top:248px;" width="72" height="23" viewBox="0 0 72 23" preserveAspectRatio="none"><path d="M1 8 H49 V1 L71 11.5 L49 22 V15 H1Z" fill="#ff0000"/></svg>
<svg class="r" style="left:190px;top:368px;" width="46" height="46" viewBox="0 0 46 46" preserveAspectRatio="none"><circle cx="22.6" cy="23" r="17.3" fill="none" stroke="#ff0000" stroke-width="7"/></svg>
<svg class="r" style="left:236px;top:380px;" width="68" height="23" viewBox="0 0 68 23" preserveAspectRatio="none"><path d="M1.9 11.2 L22.6 1.4 V8 H65.6 V14.7 H22.6 V21.1Z" fill="#ff0000"/></svg>
</body></html>
